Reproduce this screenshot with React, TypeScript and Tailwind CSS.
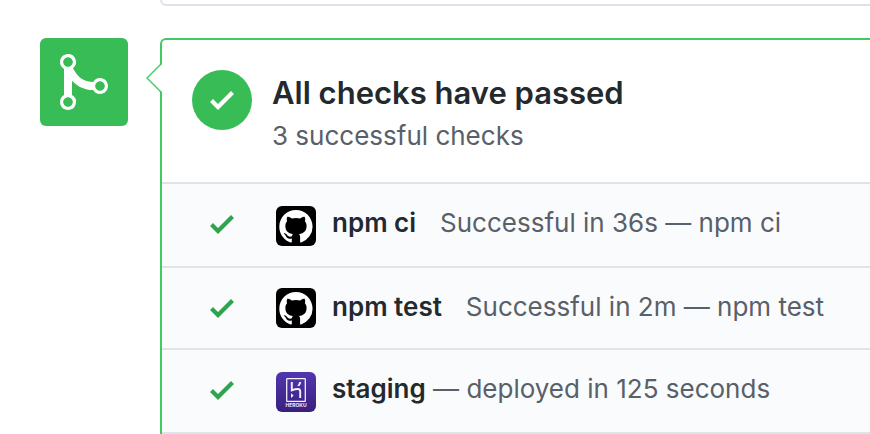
import type { ReactNode } from "react";

function MergeIcon() {
  return (
    <svg viewBox="0 0 12 16" className="h-16 w-12 fill-current" aria-hidden="true">
      <path
        fillRule="evenodd"
        d="M10 7c-.73 0-1.38.41-1.73 1.02V8C7.22 7.98 6 7.64 5.14 6.98c-.75-.58-1.5-1.61-1.89-2.44A1.993 1.993 0 0 0 2 .99C.89.99 0 1.89 0 3a2 2 0 0 0 1 1.72v6.56c-.59.35-1 .99-1 1.72 0 1.11.89 2 2 2a1.993 1.993 0 0 0 1-3.72V7.67c.67.7 1.44 1.27 2.3 1.69.86.42 2.03.63 2.97.64v-.02c.36.61 1 1.02 1.73 1.02 1.11 0 2-.89 2-2 0-1.11-.89-2-2-2zm-6.8 6c0 .66-.55 1.2-1.2 1.2-.65 0-1.2-.55-1.2-1.2 0-.65.55-1.2 1.2-1.2.65 0 1.2.55 1.2 1.2zM2 4.2C1.34 4.2.8 3.65.8 3c0-.65.55-1.2 1.2-1.2.65 0 1.2.55 1.2 1.2 0 .65-.55 1.2-1.2 1.2zm8 6c-.66 0-1.2-.55-1.2-1.2 0-.65.55-1.2 1.2-1.2.65 0 1.2.55 1.2 1.2 0 .65-.55 1.2-1.2 1.2z"
      />
    </svg>
  );
}

function CheckIcon() {
  return (
    <svg viewBox="0 0 12 16" className="h-8 w-6 fill-current" aria-hidden="true">
      <path d="M12 5l-8 8-4-4 1.5-1.5L4 10l6.5-6.5L12 5z" />
    </svg>
  );
}

function GitHubAvatar() {
  return (
    <svg viewBox="0 0 40 40" className="size-10 rounded-md bg-black" role="img" aria-label="GitHub Actions">
      <path
        transform="translate(3.300 4) scale(2.080)"
        fill="#fff"
        d="M8 0C3.58 0 0 3.58 0 8c0 3.54 2.29 6.53 5.47 7.59.4.07.55-.17.55-.38 0-.19-.01-.82-.01-1.49-2.01.37-2.53-.49-2.69-.94-.09-.23-.48-.94-.82-1.13-.28-.15-.68-.52-.01-.53.63-.01 1.08.58 1.23.82.72 1.21 1.87.87 2.33.66.07-.52.28-.87.51-1.07-1.78-.2-3.64-.89-3.64-3.95 0-.87.31-1.59.82-2.15-.08-.2-.36-1.02.08-2.12 0 0 .67-.21 2.2.82.64-.18 1.32-.27 2-.27s1.36.09 2 .27c1.53-1.04 2.2-.82 2.2-.82.44 1.1.16 1.92.08 2.12.51.56.82 1.27.82 2.15 0 3.07-1.87 3.75-3.65 3.95.29.25.54.73.54 1.48 0 1.07-.01 1.93-.01 2.2 0 .21.15.46.55.38A8.01 8.01 0 0 0 16 8c0-4.42-3.58-8-8-8z"
      />
    </svg>
  );
}

function HerokuAvatar() {
  return (
    <span className="flex size-10 flex-col items-center rounded-md bg-linear-to-b from-[#5236b0] to-[#38207f] pt-1.5 text-[#f3effb]">
      <svg viewBox="0 0 20 24" className="h-6 w-5" aria-hidden="true">
        <rect x="0.700" y="0.700" width="18.600" height="22.600" rx="0.600" fill="none" stroke="currentColor" strokeWidth="1.300" />
        <path
          d="M5.800 4v8.300c2-.8 4-1.300 5.800-1.300 1.900 0 2.600 1 2.600 2.400V20"
          fill="none"
          stroke="currentColor"
          strokeWidth="1.900"
        />
        <path d="M5 15.200l2.700 2.400L5 20zM13.200 4h2c-.2 1.500-.9 2.900-2 4.100h-2c1.100-1.300 1.800-2.600 2-4.100z" fill="currentColor" />
      </svg>
      <span className="mt-px text-[5px] leading-[5px] font-bold">HEROKU</span>
    </span>
  );
}

type CheckRowProps = { avatar: ReactNode; roomy?: boolean; children: ReactNode };

function CheckRow({ avatar, roomy = false, children }: CheckRowProps) {
  return (
    <li className="flex items-start border-t-2 border-[#e0e3ea] bg-[#fafbfd] py-5 pr-8 pl-12">
      <span className="flex h-10 items-center text-[#2ea44f]">
        <CheckIcon />
      </span>
      <span className={roomy ? "mt-0.5 ml-[42px] shrink-0" : "ml-[42px] shrink-0"}>{avatar}</span>
      <p className="ml-4 text-[26px] leading-[38px] whitespace-nowrap text-[#586069]">{children}</p>
    </li>
  );
}

function CheckName({ children }: { children: ReactNode }) {
  return <strong className="font-semibold text-[#24292e]">{children}</strong>;
}

export default function App() {
  return (
    <main className="overflow-hidden bg-white font-['Inter','Liberation_Sans',sans-serif]">
      <div className="ml-40 h-1.5 overflow-hidden">
        <div className="-mt-4 -mr-4 h-[22px] rounded-md border-2 border-[#dfe2e8]" />
      </div>

      <div className="mt-8 flex items-start pl-10">
        <div className="flex size-22 shrink-0 items-center justify-center rounded-md bg-[#38bd56] text-white">
          <MergeIcon />
        </div>

        <section className="relative -mr-4 ml-8 min-w-0 grow rounded-t-md border-2 border-b-0 border-[#3fcb5f]">
          <svg
            viewBox="0 0 17 32"
            className="absolute top-[22px] -left-4 h-8 w-[17px]"
            aria-hidden="true"
          >
            <path d="M17 1L15.500 2.500L1 16L15.500 30L17 31z" fill="#fff" />
            <path d="M15.500 1.500L1 16L15.500 30.500" fill="none" stroke="#3fcb5f" strokeWidth="1.400" />
          </svg>

          <header className="flex items-start px-[30px] pt-[30px] pb-[26px]">
            <span className="flex size-15 shrink-0 items-center justify-center rounded-full bg-[#38bd56] text-white">
              <CheckIcon />
            </span>
            <div className="ml-5">
              <h1 className="text-[31px] leading-[46px] font-semibold text-[#24292e]">All checks have passed</h1>
              <p className="text-[26px] leading-10 text-[#586069]">3 successful checks</p>
            </div>
          </header>

          <ul className="border-b-2 border-[#e0e3ea]">
            <CheckRow avatar={<GitHubAvatar />} roomy>
              <CheckName>npm ci</CheckName>
              <span className="ml-6">Successful in 36s — npm ci</span>
            </CheckRow>
            <CheckRow avatar={<GitHubAvatar />}>
              <CheckName>npm test</CheckName>
              <span className="ml-6">Successful in 2m — npm test</span>
            </CheckRow>
            <CheckRow avatar={<HerokuAvatar />} roomy>
              <CheckName>staging</CheckName> — deployed in 125 seconds
            </CheckRow>
          </ul>
        </section>
      </div>
    </main>
  );
}
